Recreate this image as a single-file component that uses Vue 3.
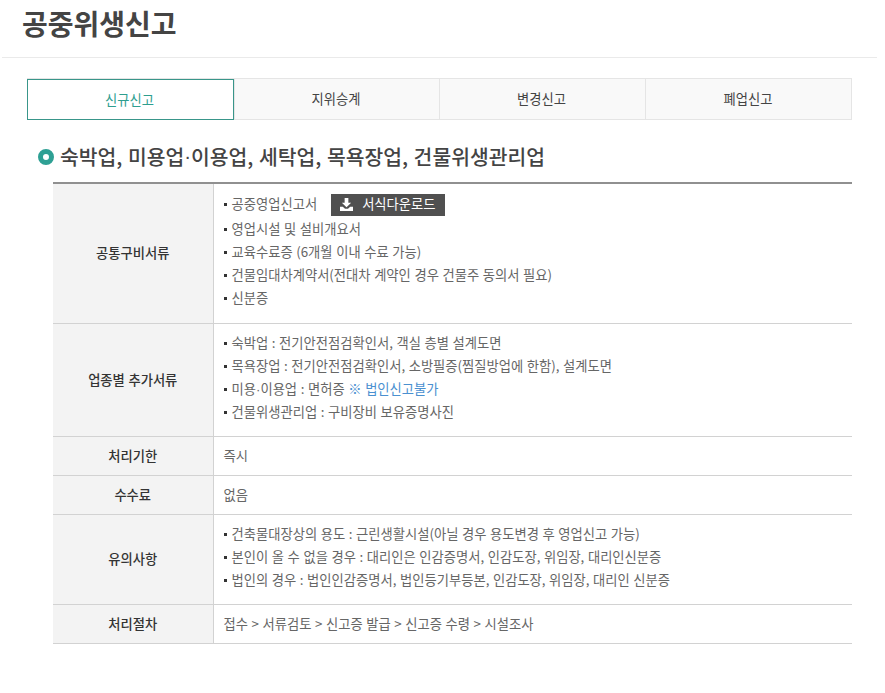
<script setup>
const tabs = ['신규신고', '지위승계', '변경신고', '폐업신고']
const extra = [
  '숙박업 : 전기안전점검확인서, 객실 층별 설계도면',
  '목욕장업 : 전기안전점검확인서, 소방필증(찜질방업에 한함), 설계도면',
]
const common = [
  '영업시설 및 설비개요서',
  '교육수료증 (6개월 이내 수료 가능)',
  '건물임대차계약서(전대차 계약인 경우 건물주 동의서 필요)',
  '신분증',
]
const notes = [
  '건축물대장상의 용도 : 근린생활시설(아닐 경우 용도변경 후 영업신고 가능)',
  '본인이 올 수 없을 경우 : 대리인은 인감증명서, 인감도장, 위임장, 대리인신분증',
  '법인의 경우 : 법인인감증명서, 법인등기부등본, 인감도장, 위임장, 대리인 신분증',
]
</script>

<template>
  <div class="page">
    <header class="head">
      <h1>공중위생신고</h1>
    </header>
    <nav class="tabs">
      <a v-for="(t, i) in tabs" :key="t" class="tab" :class="{ active: i === 0 }">{{ t }}</a>
    </nav>
    <h2 class="section"><span class="dot"></span>숙박업, 미용업<span class="mid">·</span>이용업, 세탁업, 목욕장업, 건물위생관리업</h2>
    <table class="info">
      <tbody>
        <tr>
          <th>공통구비서류</th>
          <td class="list tall">
            <ul>
              <li class="first">공중영업신고서<a class="btn"><svg width="13" height="13" viewBox="0 0 14 14"><path d="M5 0h4v5h3L7 10 2 5h3z" fill="#fff"/><path d="M0 9.5h3l2.4 2.2h3.2L11 9.5h3V14H0z" fill="#fff"/></svg>서식다운로드</a></li>
              <li v-for="c in common" :key="c">{{ c }}</li>
            </ul>
          </td>
        </tr>
        <tr>
          <th>업종별 추가서류</th>
          <td class="list">
            <ul>
              <li v-for="c in extra" :key="c">{{ c }}</li>
              <li>미용<span class="mid">·</span>이용업 : 면허증 <span class="blue">※ 법인신고불가</span></li>
              <li>건물위생관리업 : 구비장비 보유증명사진</li>
            </ul>
          </td>
        </tr>
        <tr><th>처리기한</th><td>즉시</td></tr>
        <tr><th>수수료</th><td>없음</td></tr>
        <tr>
          <th>유의사항</th>
          <td class="list">
            <ul>
              <li v-for="c in notes" :key="c">{{ c }}</li>
            </ul>
          </td>
        </tr>
        <tr><th>처리절차</th><td>접수 &gt; 서류검토 &gt; 신고증 발급 &gt; 신고증 수령 &gt; 시설조사</td></tr>
      </tbody>
    </table>
  </div>
</template>

<style>
html, body { margin: 0; background: #fff; }
</style>

<style scoped>
.page {
  width: 885px;
  height: 693px;
  overflow: hidden;
  font-family: "Noto Sans CJK KR", "Noto Sans", sans-serif;
  color: #666;
  font-size: 13.3px;
  word-spacing: 0.6px;
  box-sizing: border-box;
}
.head {
  margin: 0 8px 0 2px;
  height: 57px;
  border-bottom: 1px solid #eaeaea;
  padding-left: 20px;
}
h1 {
  margin: 0;
  font-size: 28px;
  line-height: 46px;
  font-weight: 700;
  color: #444;
}
.tabs {
  display: grid;
  grid-template-columns: 207px 205px 206px 207px;
  margin: 20px 0 0 27px;
  width: 825px;
  height: 42px;
  box-sizing: border-box;
  background: #f9f9f9;
  border: 1px solid #e5e5e5;
  border-left: 0;
}
.tab {
  display: flex;
  align-items: center;
  justify-content: center;
  padding: 0 2px 1px 0;
  border-left: 1px solid #e5e5e5;
  color: #444;
  box-sizing: border-box;
}
.tab.active {
  margin-bottom: -1px;
  border: 1px solid #39968a;
  background: #fff;
  color: #2e9e8f;
}
.section {
  display: flex;
  align-items: center;
  margin: 22px 0 0 38px;
  height: 28px;
  font-size: 20.4px;
  font-weight: 500;
  color: #444;
  line-height: 28px;
  word-spacing: 1px;
  white-space: pre-wrap;
}
.mid {
  font-family: "Liberation Sans", sans-serif;
}
.dot {
  width: 6px;
  height: 6px;
  border: 5px solid #2ea094;
  border-radius: 50%;
  margin: 1px 6px 0 0;
  background: #fff;
}
.info {
  margin: 12px 0 0 53px;
  width: 799px;
  border-collapse: collapse;
  table-layout: fixed;
  border-top: 2px solid #909090;
}
th, td {
  border-bottom: 1px solid #d2d2d2;
  padding: 0 0 2px;
  height: 39px;
  font-weight: 400;
  box-sizing: border-box;
}
th {
  width: 160px;
  background: #f3f3f3;
  border-right: 1px solid #d2d2d2;
  color: #333;
  font-weight: 500;
  text-align: center;
}
td {
  padding-left: 10px;
}
td.list {
  padding: 7px 0 13px 10px;
}
td.list.tall {
  padding-bottom: 14px;
}
ul {
  list-style: none;
  margin: 0;
  padding: 0;
}
li {
  position: relative;
  padding-left: 8px;
  line-height: 23px;
  height: 23px;
}
li::before {
  content: "";
  position: absolute;
  left: 0;
  top: 11px;
  width: 3px;
  height: 3px;
  background: #333;
}
li.first {
  height: 26px;
  line-height: 25px;
}
li.first::before {
  top: 12px;
}
.btn {
  display: inline-flex;
  align-items: center;
  gap: 9px;
  height: 22px;
  width: 114px;
  box-sizing: border-box;
  padding: 0 0 2px 9px;
  margin-left: 14px;
  margin-top: 3px;
  background: #505050;
  color: #fff;
  line-height: 20px;
  vertical-align: top;
}
.blue { color: #4a90d0; }
</style>
